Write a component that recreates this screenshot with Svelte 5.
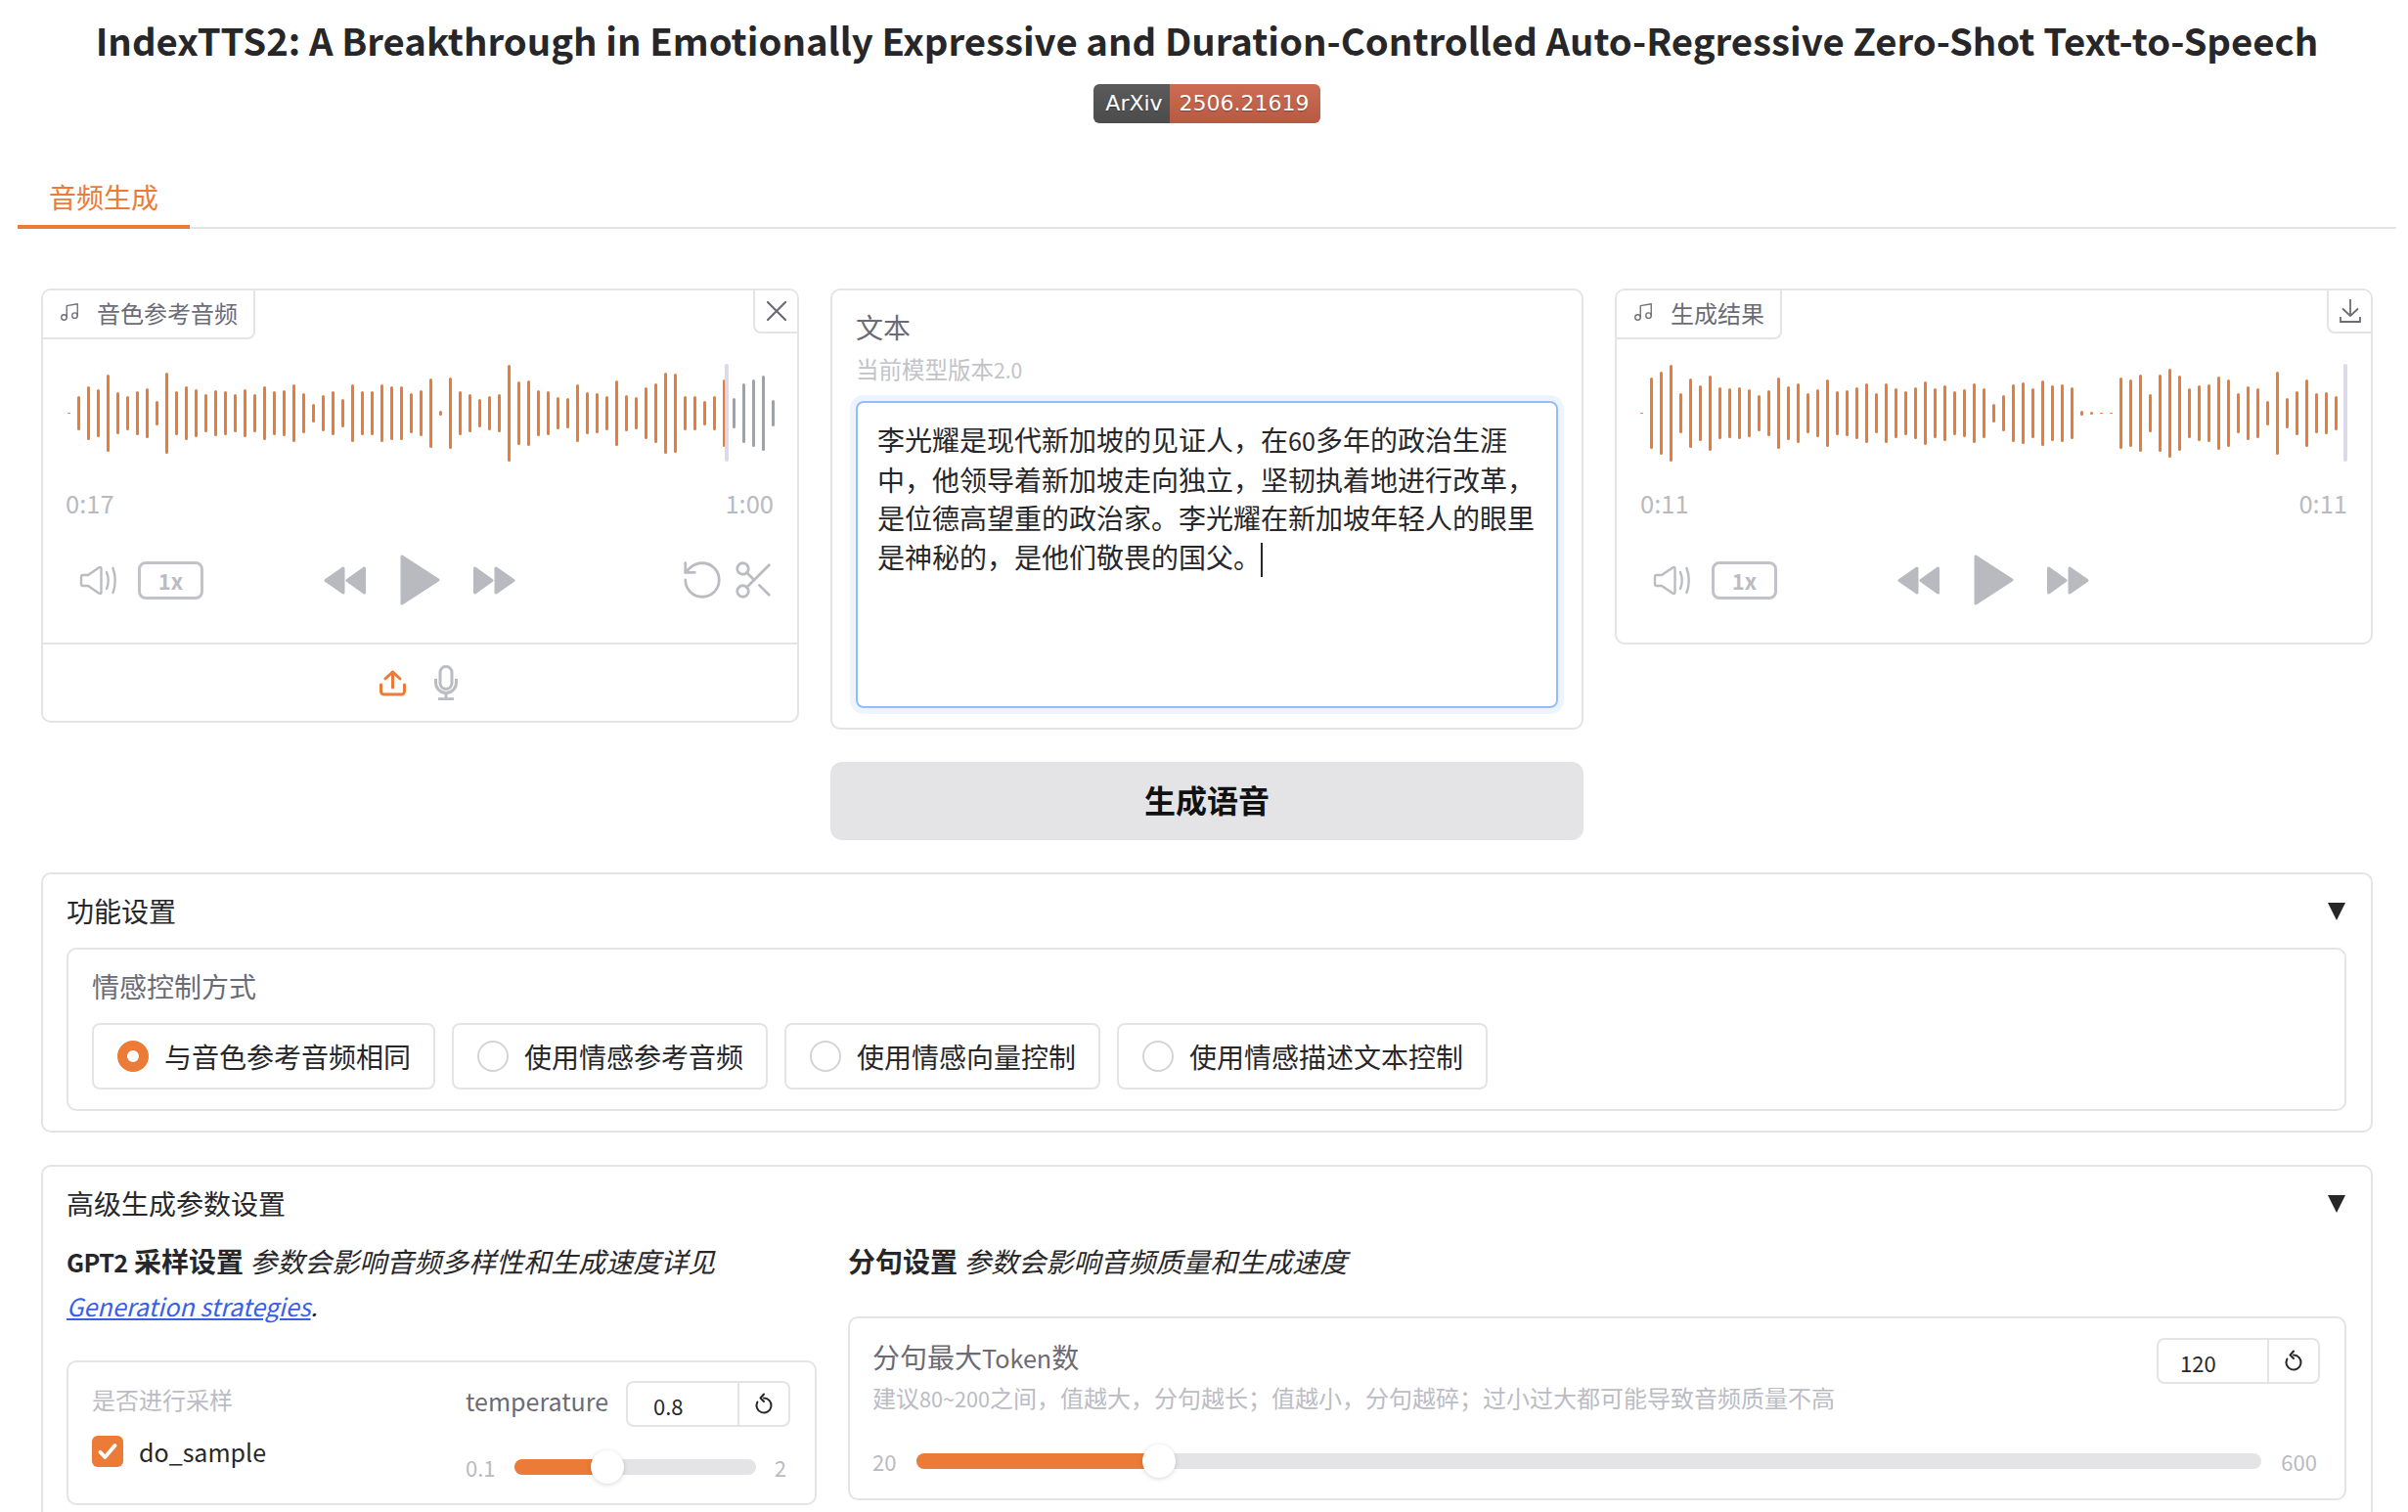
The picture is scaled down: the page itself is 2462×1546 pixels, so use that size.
<script>
  const refBars = [1,35,55,49,79,43,35,45,51,25,83,45,55,49,39,47,45,39,49,39,55,45,47,59,41,19,37,45,29,59,45,45,59,55,55,41,47,71,5,73,45,39,29,35,39,99,65,67,47,45,33,31,59,43,41,35,67,37,33,53,61,83,81,35,35,25,35,69,31,61,69,77,27];
  const outBars = [1,73,85,99,41,71,57,77,53,51,53,49,37,47,73,55,61,41,49,69,45,47,53,61,41,61,51,45,53,65,51,57,45,49,61,51,19,37,59,63,51,67,57,59,53,5,3,1,1,73,69,79,39,79,91,77,51,57,59,75,69,41,55,51,25,85,31,45,69,41,43,35];
  const radios = ['与音色参考音频相同','使用情感参考音频','使用情感向量控制','使用情感描述文本控制'];
</script>

{#snippet music()}
  <svg class="music" viewBox="0 0 24 24"><path d="M9 18V5l12-2v13"/><circle cx="6" cy="18" r="3"/><circle cx="18" cy="16" r="3"/></svg>
{/snippet}

{#snippet reset()}
  <svg class="reset" viewBox="0 0 24 24"><path d="M12 5.500a7.500 7.500 0 1 1-6.600 4"/><path d="M12 1.500 8.500 5.500l3.500 3.500"/></svg>
{/snippet}

{#snippet transport()}
  <div class="left-ctl">
    <svg class="vol" viewBox="0 0 39 29"><path d="M2 11q0-2 2-2h5L20 1.500q2.500-1.500 2.500 1v24q0 2.500-2.500 1L9 20H4q-2 0-2-2z"/><path d="M28 6q3.500 8.500 0 17"/><path d="M34.500 2q4.500 12.500 0 25"/></svg>
    <span class="speed">1x</span>
  </div>
  <div class="mid-ctl">
    <svg class="skip" viewBox="0 0 43 29"><path d="M2 14.500 20 2v25zM24 14.500 41.500 2v25z"/></svg>
    <svg class="play" viewBox="0 0 41 52"><path d="M2 2 39 26 2 50z"/></svg>
    <svg class="skip" viewBox="0 0 43 29"><path d="M41 14.500 23 2v25zM19 14.500 1.500 2v25z"/></svg>
  </div>
{/snippet}

<div class="page">
  <h1>IndexTTS2: A Breakthrough in Emotionally Expressive and Duration-Controlled Auto-Regressive Zero-Shot Text-to-Speech</h1>
  <div class="badge"><span class="b-l">ArXiv</span><span class="b-r">2506.21619</span></div>

  <nav class="tabs"><span class="tab">音频生成</span></nav>

  <main>
    <div class="row">
      <section class="card audio">
        <div class="label">{@render music()}<span>音色参考音频</span></div>
        <div class="corner"><svg class="close" viewBox="0 0 20 20"><path d="M1 1l18 18M19 1 1 19"/></svg></div>
        <div class="wave">
          {#each refBars as h, i}
            <i class:done={69 + 10 * i < 741} style="height:{h}px"></i>
          {/each}
          <b class="cursor ref"></b>
        </div>
        <div class="times"><span>0:17</span><span>1:00</span></div>
        <div class="controls">
          {@render transport()}
          <div class="right-ctl">
            <svg class="lu" viewBox="0 0 24 24"><path d="M3 12a9 9 0 1 0 9-9 9.750 9.750 0 0 0-6.740 2.740L3 8"/><path d="M3 3v5h5"/></svg>
            <svg class="lu" viewBox="0 0 24 24"><circle cx="6" cy="6" r="3"/><path d="M8.120 8.120 12 12M20 4 8.120 15.880"/><circle cx="6" cy="18" r="3"/><path d="M14.800 14.800 20 20"/></svg>
          </div>
        </div>
        <div class="sources">
          <svg class="upload" viewBox="0 0 27 27"><path d="M1.500 15v7a3 3 0 0 0 3 3h18a3 3 0 0 0 3-3v-7"/><path d="M13.500 18V2M6 9l7.500-7L21 9"/></svg>
          <svg class="mic" viewBox="0 0 24 36"><rect x="6" y="1.500" width="12" height="23" rx="6"/><path d="M1.500 14v4a10.500 10.500 0 0 0 21 0v-4M12 28.500V35M4 34.800h16"/></svg>
        </div>
      </section>

      <div class="center">
        <section class="card textcard">
          <div class="tlabel">文本</div>
          <div class="tinfo">当前模型版本<span class="lat">2.0</span></div>
          <div class="textarea">李光耀是现代新加坡的见证人，在<span class="lat">60</span>多年的政治生涯中，他领导着新加坡走向独立，坚韧执着地进行改革，是位德高望重的政治家。李光耀在新加坡年轻人的眼里是神秘的，是他们敬畏的国父。<span class="caret"></span></div>
        </section>
        <button class="go">生成语音</button>
      </div>

      <section class="card audio outp">
        <div class="label">{@render music()}<span>生成结果</span></div>
        <div class="corner"><svg class="dl" viewBox="0 0 22 24"><path d="M11 0v17M3 9.500l8 7.500 8-7.500M1 18v5h20v-5"/></svg></div>
        <div class="wave">
          {#each outBars as h}
            <i class="done" style="height:{h}px"></i>
          {/each}
          <b class="cursor out"></b>
        </div>
        <div class="times"><span>0:11</span><span>0:11</span></div>
        <div class="controls">
          {@render transport()}
        </div>
      </section>
    </div>

    <section class="card acc first">
      <div class="acc-head"><span>功能设置</span><svg class="tri" viewBox="0 0 18 18"><path d="M0 0h18L9 18z"/></svg></div>
      <div class="card inner">
        <div class="ilabel">情感控制方式</div>
        <div class="radios">
          {#each radios as r, i}
            <label class="radio"><span class="dot" class:on={i === 0}></span>{r}</label>
          {/each}
        </div>
      </div>
    </section>

    <section class="card acc second">
      <div class="acc-head"><span>高级生成参数设置</span><svg class="tri" viewBox="0 0 18 18"><path d="M0 0h18L9 18z"/></svg></div>
      <div class="cols">
        <div>
          <p class="md"><strong><span class="lat gpt">GPT2</span> 采样设置</strong> <em>参数会影响音频多样性和生成速度详见</em><em class="lat line2"><a href="#top">Generation strategies</a>.</em></p>
          <div class="card gbox">
            <div class="sample">
              <div class="small">是否进行采样</div>
              <label class="chk"><span class="box"><svg viewBox="0 0 16 16"><path d="M3 8.500l3.200 3.500L13 4"/></svg></span>do_sample</label>
            </div>
            <div class="temp">
              <div class="shead">
                <span class="slabel">temperature</span>
                <div class="num w168"><span class="val">0.8</span><span class="rs">{@render reset()}</span></div>
              </div>
              <div class="slider s1">
                <span class="lim">0.1</span>
                <div class="track"><div class="fill" style="width:{(95 / 248) * 100}%"></div><div class="thumb"></div></div>
                <span class="lim">2</span>
              </div>
            </div>
          </div>
        </div>
        <div>
          <p class="md"><strong>分句设置</strong> <em>参数会影响音频质量和生成速度</em></p>
          <div class="card tbox">
            <div class="thead">
              <div>
                <div class="tklabel">分句最大<span class="lat">Token</span>数</div>
                <div class="tkinfo">建议<span class="lat">80~200</span>之间，值越大，分句越长；值越小，分句越碎；过小过大都可能导致音频质量不高</div>
              </div>
              <div class="num w167"><span class="val">120</span><span class="rs">{@render reset()}</span></div>
            </div>
            <div class="slider s2">
              <span class="lim">20</span>
              <div class="track"><div class="fill" style="width:{(247 / 1376) * 100}%"></div><div class="thumb"></div></div>
              <span class="lim">600</span>
            </div>
          </div>
        </div>
      </div>
    </section>
  </main>
</div>

<style>
  :global(body) { margin: 0; background: #fff; overflow: hidden; }
  * { box-sizing: border-box; }
  .page {
    width: 2462px; height: 1546px; overflow: hidden; background: #fff; color: #27272a;
    font-family: "Noto Sans CJK SC", "Noto Sans", sans-serif; font-size: 28px;
  }
  .lat { font-size: 0.9em; }
  .gpt { letter-spacing: -0.6px; }
  .line2 { display: block; margin-top: -2px; }
  h1 { margin: 0; padding: 13px 0 0 6px; height: 86px; line-height: 56px; font-size: 38.350px; font-weight: 700; text-align: center; color: #27272a; white-space: nowrap; }
  .badge { display: flex; width: 232px; height: 40px; margin: 0 0 0 1118px; border-radius: 6px; overflow: hidden; color: #fff; font-family: "DejaVu Sans", sans-serif; font-size: 22px; line-height: 40px; text-shadow: 0 1px 1px rgba(0,0,0,.35); }
  .b-l { width: 78px; padding-left: 5px; text-align: center; background: linear-gradient(#5a5a5a, #4c4c4c); }
  .b-r { flex: 1; padding-right: 2px; text-align: center; background: linear-gradient(#cc6c55, #b85a43); }

  .tabs { margin: 44px 12px 0 18px; height: 64px; border-bottom: 2px solid #e4e4e7; display: flex; }
  .tab { width: 176px; height: 64px; border-bottom: 4px solid #eb7b36; color: #eb7b36; text-align: center; line-height: 62px; font-size: 28px; }

  main { padding: 61px 36px 0 42px; display: flex; flex-direction: column; gap: 33px; }
  .row { display: grid; grid-template-columns: 775px 770px 775px; gap: 32px; align-items: start; }
  .card { border: 2px solid #e4e4e7; border-radius: 10px; background: #fff; position: relative; }

  .audio { overflow: hidden; }
  .label { position: absolute; left: 0; top: 0; height: 50px; padding: 0 16px 4px 16px; display: flex; align-items: center; gap: 17px; font-size: 24px; color: #6b6b75; border-right: 2px solid #e4e4e7; border-bottom: 2px solid #e4e4e7; border-bottom-right-radius: 8px; background: #fff; }
  .music { width: 22px; height: 22px; fill: none; stroke: #71717a; stroke-width: 1.500; stroke-linecap: round; stroke-linejoin: round; }
  .corner { position: absolute; right: 0; top: 0; width: 45px; height: 44px; display: flex; align-items: center; justify-content: center; border-left: 2px solid #e4e4e7; border-bottom: 2px solid #e4e4e7; border-bottom-left-radius: 8px; background: #fff; }
  .close { width: 20px; height: 20px; fill: none; stroke: #6b6b75; stroke-width: 2.200; stroke-linecap: round; }
  .dl { width: 22px; height: 24px; fill: none; stroke: #6b6b75; stroke-width: 1.800; }
  .wave { position: relative; height: 100px; margin-top: 75px; padding-left: 25px; display: flex; align-items: center; gap: 7px; }
  .outp .wave { padding-left: 24px; }
  .wave i { display: block; width: 3px; min-height: 1px; border-radius: 2px; background: #9ca3af; flex: none; }
  .wave i.done { background: #eb7b36; }
  .cursor { position: absolute; top: 0; width: 4px; height: 100px; border-radius: 2px; background: #dcd9e9; }
  .cursor.ref { left: 697px; }
  .cursor.out { left: 743px; }
  .times { margin-top: 26px; height: 32px; line-height: 32px; display: flex; justify-content: space-between; padding: 0 24px 0 23px; font-size: 25.500px; color: #b9bac1; }
  .outp .times { padding: 0 24px 0 24px; }
  .controls { margin-top: 37px; padding: 0 21px 38px 37px; height: 90px; display: grid; grid-template-columns: 250px 196px 1fr; align-items: start; }
  .left-ctl { height: 52px; display: flex; align-items: center; gap: 21px; }
  .vol { width: 39px; height: 29px; fill: none; stroke: #bbbcc2; stroke-width: 2.400; stroke-linecap: round; stroke-linejoin: round; }
  .speed { width: 67px; height: 39px; border: 3px solid #c2c3c9; border-radius: 8px; display: flex; align-items: center; justify-content: center; font-size: 22px; font-weight: 700; color: #bbbcc2; }
  .mid-ctl { height: 52px; display: flex; align-items: center; justify-content: space-between; }
  .skip { width: 43px; height: 29px; fill: #b9bac0; stroke: #b9bac0; stroke-width: 3; stroke-linejoin: round; }
  .play { width: 41px; height: 52px; fill: #b9bac0; stroke: #b9bac0; stroke-width: 3; stroke-linejoin: round; }
  .right-ctl { height: 52px; display: flex; align-items: center; justify-content: flex-end; gap: 7px; }
  .lu { width: 46px; height: 46px; fill: none; stroke: #bbbcc2; stroke-width: 1.450; stroke-linecap: round; stroke-linejoin: round; }
  .sources { height: 80px; border-top: 2px solid #e4e4e7; padding-right: 4px; display: flex; align-items: center; justify-content: center; gap: 29px; }
  .upload { width: 27px; height: 27px; fill: none; stroke: #eb7b36; stroke-width: 3; stroke-linecap: round; stroke-linejoin: round; }
  .mic { width: 24px; height: 36px; fill: none; stroke: #bbbcc2; stroke-width: 3; }

  .center { display: flex; flex-direction: column; gap: 33px; }
  .textcard { height: 451px; padding: 17px 24px 0; }
  .tlabel { height: 40px; line-height: 40px; font-size: 28px; color: #6b6b75; }
  .tinfo { margin-top: 6px; height: 34px; line-height: 34px; font-size: 23.500px; color: #c2c3c9; }
  .textarea { margin-top: 16px; height: 314px; padding: 18px 13px 0 20px; border: 2px solid #93bdf8; border-radius: 8px; box-shadow: 0 0 0 6px #eef4fe; line-height: 39.600px; font-size: 28px; color: #27272a; }
  .caret { display: inline-block; width: 2px; height: 35px; background: #27272a; vertical-align: -9px; margin-left: 0; }
  .go { width: 100%; height: 80px; padding: 0 0 5px; border: 0; border-radius: 12px; background: #e4e4e7; color: #111; font: 700 32px "Noto Sans CJK SC", sans-serif; }

  .acc { padding: 17px 25px 0 24px; }
  .first { height: 266px; }
  .second { height: 400px; }
  .acc-head { height: 40px; line-height: 40px; display: flex; justify-content: space-between; align-items: center; }
  .tri { width: 18px; height: 18px; fill: #27272a; margin: 1px 1px 0 0; }
  .inner { margin-top: 18px; height: 167px; padding: 17px 24px 0; }
  .ilabel { height: 40px; line-height: 40px; color: #6b6b75; font-size: 28px; }
  .radios { margin-top: 18px; display: flex; gap: 17px; }
  .radio { height: 68px; padding: 0 23px 0 24px; border: 2px solid #e4e4e7; border-radius: 8px; display: flex; align-items: center; gap: 16px; white-space: nowrap; }
  .dot { width: 32px; height: 32px; border-radius: 50%; border: 2px solid #d4d4d8; background: #fff; flex: none; }
  .dot.on { border: 10px solid #eb7b36; }

  .cols { display: grid; grid-template-columns: 767px 1532px; gap: 32px; margin-top: 16px; }
  .md { margin: 0; line-height: 47px; font-size: 28px; color: #27272a; }
  .md a { color: #3a5fe5; text-decoration: underline; }
  .md strong { font-weight: 700; }
  .gbox { margin-top: 32px; height: 148px; padding: 22px 25px 0 24px; display: flex; }
  .gbox .sample { width: 382px; }
  .small { height: 32px; line-height: 32px; font-size: 24px; color: #bbbcc4; }
  .chk { margin-top: 21px; height: 32px; display: flex; align-items: center; gap: 16px; font-size: 25px; color: #27272a; }
  .box { width: 32px; height: 32px; border-radius: 6px; background: #eb7b36; display: flex; align-items: center; justify-content: center; }
  .box svg { width: 24px; height: 24px; fill: none; stroke: #fff; stroke-width: 2.600; stroke-linecap: round; stroke-linejoin: round; }
  .temp { width: 332px; margin-top: -3px; }
  .shead { display: flex; justify-content: space-between; align-items: flex-start; }
  .slabel { line-height: 40px; font-size: 25px; color: #6b6b75; }
  .num { height: 47px; border: 2px solid #e4e4e7; border-radius: 8px; display: flex; font-size: 22px; }
  .w168 { width: 168px; }
  .w167 { width: 167px; margin-top: 1px; }
  .val { flex: 1; padding-left: 26px; line-height: 46px; }
  .w167 .val { padding-left: 22px; line-height: 46px; }
  .rs { width: 52px; border-left: 2px solid #e4e4e7; display: flex; align-items: center; justify-content: center; }
  .reset { width: 24px; height: 24px; fill: none; stroke: #27272a; stroke-width: 2; stroke-linecap: round; stroke-linejoin: round; }
  .slider { display: flex; align-items: center; }
  .lim { font-size: 22px; color: #b9bac1; white-space: nowrap; }
  .track { position: relative; height: 16px; border-radius: 8px; background: #e4e4e7; flex: 1; }
  .fill { height: 16px; border-radius: 8px 0 0 8px; background: #eb7b36; }
  .thumb { position: absolute; top: 50%; width: 34px; height: 34px; margin: -17px 0 0 -17px; border-radius: 50%; background: #fff; box-shadow: 0 1px 5px rgba(0,0,0,.16); }
  .s1 { margin-top: 25px; padding-right: 4px; }
  .s1 .track { margin: 0 19px; }
  .s1 .thumb { left: 95px; }
  .tbox { margin-top: 33px; height: 188px; padding: 19px 25px 0 23px; }
  .thead { display: flex; justify-content: space-between; align-items: flex-start; }
  .tklabel { height: 40px; line-height: 40px; color: #6b6b75; font-size: 28px; }
  .tkinfo { margin-top: 2px; height: 40px; line-height: 40px; font-size: 24px; color: #bbbcc4; white-space: nowrap; }
  .s2 { margin-top: 29px; padding-right: 3px; }
  .s2 .track { margin: 0 20px 0 21px; }
  .s2 .thumb { left: 248px; }
</style>
